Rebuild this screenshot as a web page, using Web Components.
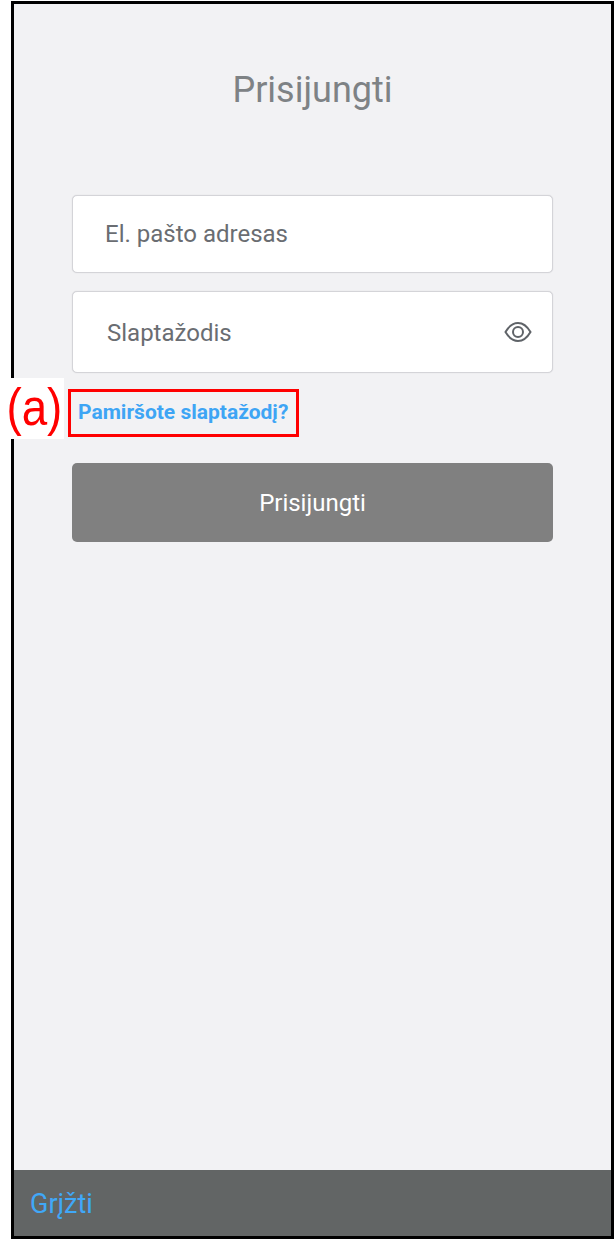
<!DOCTYPE html>
<html>
<head>
<meta charset="utf-8">
<style>
  html, body { margin: 0; background: #fff; }
  body { font-family: Roboto, "Liberation Sans", sans-serif; }
</style>
</head>
<body>
<login-screen>
  <login-field style="height:78px;--text-left:32px;--text-top:0">El. pašto adresas</login-field>
  <login-field style="height:82px;--text-left:34px;margin-top:18px" eye>Slaptažodis</login-field>
  <forgot-link>Pamiršote slaptažodį?</forgot-link>
  <login-button>Prisijungti</login-button>
</login-screen>

<script>
class LoginScreen extends HTMLElement {
  constructor() {
    super();
    this.attachShadow({ mode: 'open' });
    this.shadowRoot.innerHTML = `
      <style>
        :host {
          display: flex;
          flex-direction: column;
          box-sizing: border-box;
          width: 603px;
          height: 1238px;
          margin: 1px 0 0 11px;
          border: 3px solid #000;
          background: #f2f2f4;
        }
        h1 {
          margin: 0;
          height: 191px;
          padding-top: 63px;
          box-sizing: border-box;
          text-align: center;
          font-size: 36px;
          line-height: 46px;
          font-weight: 400;
          color: #7e8285;
        }
        .form {
          flex: 1;
          display: flex;
          flex-direction: column;
          padding: 0 58px;
        }
        footer {
          height: 66px;
          display: flex;
          align-items: center;
          padding: 1px 0 0 16px;
          box-sizing: border-box;
          background: #626565;
          color: #40a8f8;
          font-size: 27px;
        }
      </style>
      <h1>Prisijungti</h1>
      <div class="form"><slot></slot></div>
      <footer>Grįžti</footer>
    `;
  }
}

class LoginField extends HTMLElement {
  constructor() {
    super();
    this.attachShadow({ mode: 'open' });
    this.shadowRoot.innerHTML = `
      <style>
        :host {
          display: flex;
          align-items: center;
          justify-content: space-between;
          box-sizing: border-box;
          padding: var(--text-top, 1px) 20px 0 var(--text-left, 33px);
          background: #fff;
          border: 1px solid #d4d4d8;
          box-shadow: 0 0 1px #c8c8cc;
          border-radius: 5px;
          color: #6a6d72;
          font-size: 24px;
        }
        svg { display: block; margin-top: -1px; }
      </style>
      <slot></slot>
      <svg width="28" height="22" viewBox="0 0 28 22" fill="none" stroke="#5f6368" stroke-width="2">
        <path d="M1.5 11C5 5 9 2 14 2s9 3 12.5 9C23 17 19 20 14 20S5 17 1.5 11Z"/>
        <circle cx="14" cy="11" r="5"/>
      </svg>
    `;
    if (!this.hasAttribute('eye')) this.shadowRoot.querySelector('svg').remove();
  }
}

class ForgotLink extends HTMLElement {
  constructor() {
    super();
    this.attachShadow({ mode: 'open' });
    this.shadowRoot.innerHTML = `
      <style>
        :host {
          position: relative;
          display: block;
          box-sizing: border-box;
          width: 231px;
          height: 48px;
          margin: 16px 0 26px -4px;
          padding-left: 7px;
          border: 3px solid #f00;
          color: #3ea5f4;
          font-size: 21px;
          font-weight: 700;
          line-height: 41px;
          white-space: nowrap;
        }
        .tag {
          position: absolute;
          left: -64px;
          top: -14px;
          width: 57px;
          height: 61px;
          background: #fff;
          color: #f00;
          font-family: "Liberation Sans", Arial, sans-serif;
          font-size: 52px;
          font-weight: 400;
          line-height: 58px;
          text-align: center;
        }
        .tag span {
          display: block;
          transform: translateX(-4px) scaleX(.88);
        }
      </style>
      <div class="tag"><span>(a)</span></div><slot></slot>
    `;
  }
}

class LoginButton extends HTMLElement {
  constructor() {
    super();
    this.attachShadow({ mode: 'open' });
    this.shadowRoot.innerHTML = `
      <style>
        :host {
          display: flex;
          align-items: center;
          justify-content: center;
          box-sizing: border-box;
          height: 79px;
          padding-top: 1px;
          background: #808080;
          border-radius: 5px;
          color: #fff;
          font-size: 24px;
        }
      </style>
      <slot></slot>
    `;
  }
}

customElements.define('login-screen', LoginScreen);
customElements.define('login-field', LoginField);
customElements.define('forgot-link', ForgotLink);
customElements.define('login-button', LoginButton);
</script>
</body>
</html>
